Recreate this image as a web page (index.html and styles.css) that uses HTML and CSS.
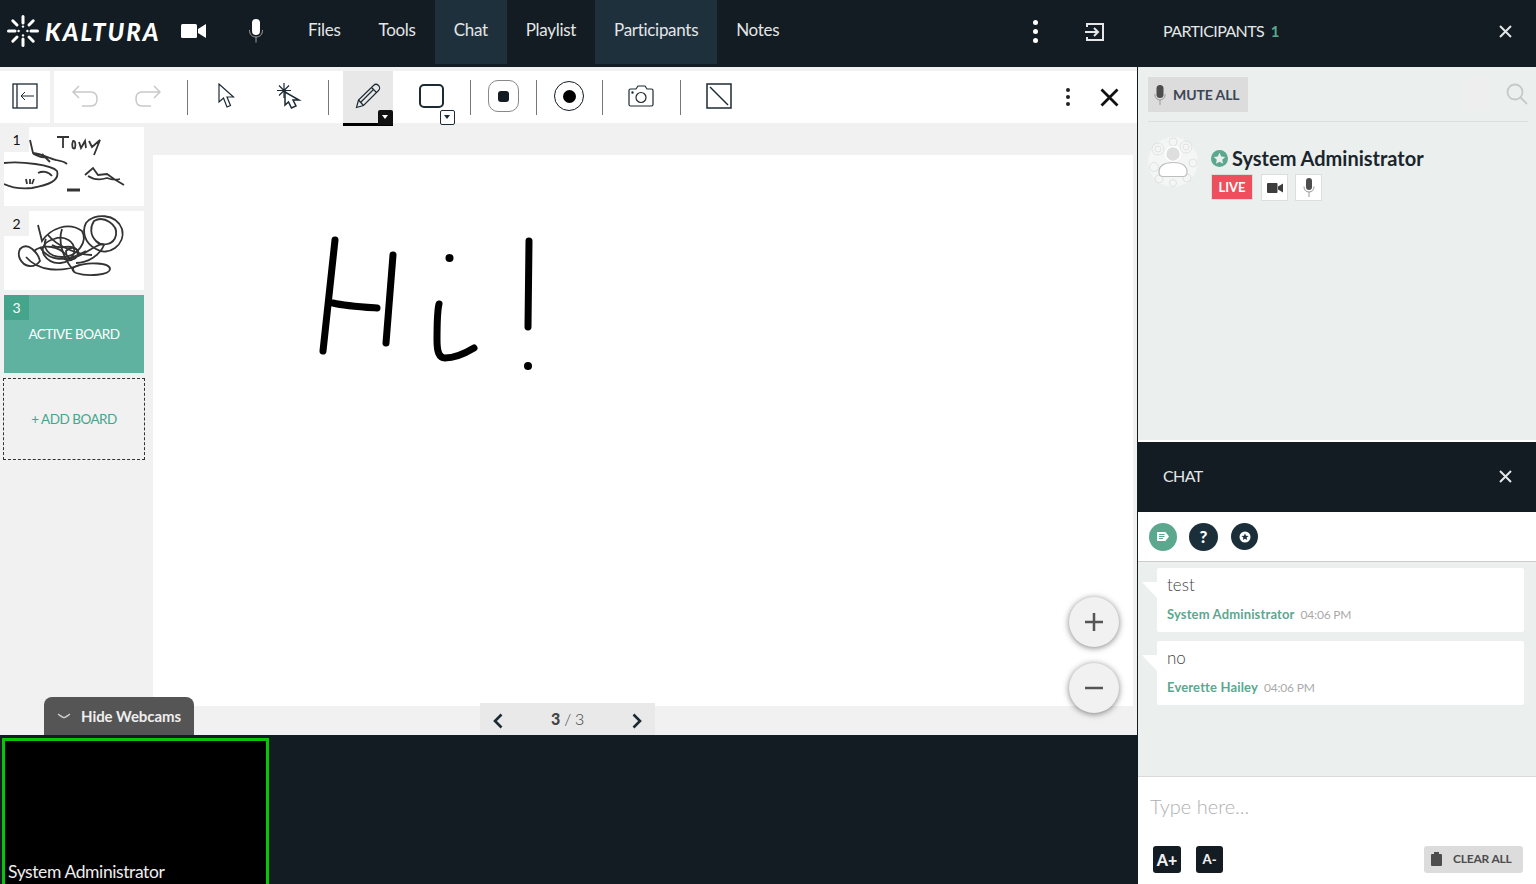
FILE: index.html
```html
<!DOCTYPE html>
<html>
<head>
<meta charset="utf-8">
	<title>Kaltura Meeting</title>
	<link rel="stylesheet" href="styles.css">
</head>
<body>
<div class="page">
	<div class="main">
		<div class="nav">
			<div class="logo">
				<svg class="logo-sun" width="32" height="32" viewBox="0 0 32 32">
					<g stroke="#fff" stroke-width="3" stroke-linecap="round">
						<path d="M16 1.500V8M16 24V30.500M1.500 16H8M24 16H30.500M5.800 5.800L10 10M22 22L26.200 26.200M26.200 5.800L22 10M10 22L5.800 26.200"/>
					</g>
					<circle cx="16" cy="11.600" r="1.200" fill="#fff"/>
					<circle cx="16" cy="20.400" r="1.200" fill="#fff"/>
					<circle cx="11.600" cy="16" r="1.200" fill="#fff"/>
					<circle cx="20.400" cy="16" r="1.200" fill="#fff"/>
				</svg>
				<span class="logo-text">KALTURA</span>
			</div>
			<span class="nav-icon nav-cam">
				<svg width="25" height="14" viewBox="0 0 25 14"><rect width="16" height="14" rx="1.500" fill="#fff"/><path d="M17 5L25 0V14L17 9Z" fill="#fff"/></svg>
			</span>
			<span class="nav-icon nav-mic">
				<svg width="16" height="24" viewBox="0 0 16 24"><rect x="4" y="0" width="8" height="16" rx="4" fill="#fff"/><path d="M1.500 11C1.500 15.500 4 18 8 18S14.500 15.500 14.500 11M8 18V23.500" fill="none" stroke="#9aa1a5" stroke-width="1"/></svg>
			</span>
			<a class="nav-link">Files</a>
			<a class="nav-link">Tools</a>
			<a class="nav-link on">Chat</a>
			<a class="nav-link">Playlist</a>
			<a class="nav-link on">Participants</a>
			<a class="nav-link">Notes</a>
			<span class="nav-space"></span>
			<span class="nav-dots"><i></i><i></i><i></i></span>
			<svg class="nav-exit" width="21" height="20" viewBox="0 0 21 20" fill="none" stroke="#e4e6e7" stroke-width="2"><path d="M3 5V2H19V18H3V15"/><path d="M1 10H14M10 6L14 10L10 14"/></svg>
		</div>
		<div class="content">
			<div class="toolbar">
				<div class="tool-side">
					<svg width="26" height="26" viewBox="0 0 26 26" fill="none" stroke="#1b2a33"><rect x="1" y="1" width="24" height="24" stroke-width="1.300"/><path d="M5 1V25" stroke-width="1.300"/><path d="M22 13H9M13 9L9 13L13 17" stroke-width="1"/></svg>
				</div>
				<div class="tool-main">
					<span class="tool"><svg width="26" height="22" viewBox="0 0 26 22" fill="none" stroke="#c9c9c9" stroke-width="1.500"><path d="M7 1L1 7L7 13M1 7H19C23 7 25 10 25 14S23 21 19 21H10"/></svg></span>
					<span class="tool"><svg width="26" height="22" viewBox="0 0 26 22" fill="none" stroke="#c9c9c9" stroke-width="1.500"><path d="M19 1L25 7L19 13M25 7H7C3 7 1 10 1 14S3 21 7 21H16"/></svg></span>
					<span class="sep"></span>
					<span class="tool"><svg width="18" height="26" viewBox="0 0 18 26" fill="none" stroke="#1b2a33" stroke-width="1.200"><path d="M2 1V19L6.500 15L10 24L13.500 22.500L10 14H16.500Z"/></svg></span>
					<span class="tool"><svg width="26" height="26" viewBox="0 0 26 26" fill="none" stroke="#1b2a33" stroke-width="1.200"><path d="M8 0V15M1 7.500H15M3 2.500L13 12.500M13 2.500L3 12.500"/><path d="M9 9V22L12.500 19L15.500 25L20 23L17 17H23Z" fill="#fff" stroke-width="1.500"/></svg></span>
					<span class="sep"></span>
					<span class="tool tool-on">
						<svg width="26" height="26" viewBox="0 0 26 26" fill="none" stroke="#1b2a33" stroke-width="1.200"><path d="M1.500 24.500L3.500 17L18.500 2.500C20 1 22 1 23.500 2.500S25 6 23.500 7.500L8.500 22.500Z"/><path d="M3.500 17L8.500 22.500M16.500 4.500L21.500 9.500M5.500 19.500L19 6"/></svg>
						<span class="caret caret-dark"></span>
					</span>
					<span class="tool">
						<span class="shape-box"></span>
						<span class="caret caret-light"></span>
					</span>
					<span class="sep"></span>
					<span class="tool tool-sm"><span class="stop-ring"><i></i></span></span>
					<span class="sep"></span>
					<span class="tool tool-sm"><span class="rec-ring"><i></i></span></span>
					<span class="sep"></span>
					<span class="tool"><svg width="26" height="22" viewBox="0 0 26 22" fill="none" stroke="#1b2a33" stroke-width="1.200"><path d="M2.500 4H8L10 1H17L19 4H23.500C24.500 4 25 4.500 25 5.500V19.500C25 20.500 24.500 21 23.500 21H2.500C1.500 21 1 20.500 1 19.500V5.500C1 4.500 1.500 4 2.500 4Z"/><circle cx="13" cy="12.500" r="5"/><circle cx="4.500" cy="7.500" r=".6"/></svg></span>
					<span class="sep"></span>
					<span class="tool"><svg width="26" height="26" viewBox="0 0 26 26" fill="none" stroke="#1b2a33"><rect x="1" y="1" width="24" height="24" stroke-width="1.500"/><path d="M4 4L22 22" stroke-width="1.500"/></svg></span>
					<span class="tool-space"></span>
					<span class="tool-dots"><i></i><i></i><i></i></span>
					<svg class="tool-close" width="19" height="19" viewBox="0 0 19 19" stroke="#111" stroke-width="2.800"><path d="M1.500 1.500L17.500 17.500M17.500 1.500L1.500 17.500"/></svg>
				</div>
			</div>
			<div class="stage">
				<div class="boards">
					<div class="board">
						<span class="board-num">1</span>
						<svg class="scribble" viewBox="0 0 140 79" fill="none" stroke="#333" stroke-width="1.800">
							<path d="M53 10H65M59 10V21M69 14C71 13 72 17 71 21C69 23 67 19 69 14ZM75 15L77 21L81 14L82 21M85 14L88 20L96 13L90 28"/>
							<path d="M26 13L29 26C38 27 46 32 52 33C56 34 60 34 63 37M29 27C33 28 37 32 42 30M38 27L46 35"/>
							<path d="M0 36C18 34 48 38 53 44C56 54 44 58 28 61C16 62 6 60 0 57M34 46C38 44 44 44 48 49M22 52L23 57M26 52V57M30 52L28 57"/>
							<path d="M81 48L89 41L94 48L103 47L110 52L120 58M84 49C90 53 97 53 103 51C108 53 112 53 116 52"/>
							<path d="M63 63H76" stroke-width="3"/>
						</svg>
					</div>
					<div class="board">
						<span class="board-num">2</span>
						<svg class="scribble" viewBox="0 0 140 79" fill="none" stroke="#333" stroke-width="1.800">
							<path d="M16 38C24 30 34 42 36 50C30 58 20 56 16 48C14 44 15 40 16 38Z"/>
							<path d="M34 14L38 30C46 18 64 10 78 20C84 30 74 46 58 46C44 46 38 36 42 28"/>
							<path d="M82 12C90 2 112 2 118 18C122 34 104 46 92 38C80 32 78 20 82 12Z"/>
							<path d="M90 10C100 4 114 14 112 24C110 34 98 36 92 30C86 24 86 16 90 10Z"/>
							<path d="M50 28C60 24 72 30 70 42C66 54 48 56 40 44C36 36 42 30 50 28Z"/>
							<path d="M62 40C68 34 76 38 74 44C72 50 62 50 62 40ZM72 46C84 42 96 30 100 34C96 44 84 52 72 52"/>
							<path d="M70 56C84 50 106 52 106 58C106 64 84 66 72 62C68 60 68 58 70 56Z"/>
							<path d="M22 46C34 60 56 62 76 54M36 36C44 50 62 52 82 40M58 18C54 30 58 46 70 60M48 34C56 40 66 32 72 38C78 44 68 52 60 48"/>
							<path d="M44 24C52 34 72 44 88 44M30 40C40 32 56 36 62 44"/>
						</svg>
					</div>
					<div class="board board-active">
						<span class="board-num">3</span>
						ACTIVE BOARD
					</div>
					<div class="board-add">+ ADD BOARD</div>
				</div>
				<div class="canvas">
					<svg class="ink" viewBox="153 155 980 551" fill="none" stroke="#000" stroke-width="7" stroke-linecap="round" stroke-linejoin="round">
						<path d="M335 240L323 351M393 255L386 343M333 303C345 306 362 307 377 308"/>
						<path d="M439 304C437 312 437 322 437 340C437 352 439 358 445 358C455 358 464 354 474 348"/>
						<path d="M529 241L528 327"/>
						<circle cx="449.500" cy="258" r="4" fill="#000" stroke="none"/>
						<circle cx="528" cy="366" r="4" fill="#000" stroke="none"/>
					</svg>
					<div class="zoom-btns">
						<span class="zoom-btn"><svg width="18" height="18" viewBox="0 0 18 18" stroke="#555" stroke-width="2.500"><path d="M9 0V18M0 9H18"/></svg></span>
						<span class="zoom-btn"><svg width="18" height="18" viewBox="0 0 18 18" stroke="#555" stroke-width="2.500"><path d="M0 9H18"/></svg></span>
					</div>
				</div>
			</div>
			<div class="hide-cams">
				<svg width="14" height="6" viewBox="0 0 14 6" fill="none" stroke="#ccc" stroke-width="1.500"><path d="M1 1C4 3 6 4.500 7 4.500S10 3 13 1"/></svg>
				Hide Webcams
			</div>
			<div class="pager">
				<svg width="10" height="16" viewBox="0 0 10 16" fill="none" stroke="#1b2a33" stroke-width="2.600"><path d="M8.500 1.500L2 8L8.500 14.500"/></svg>
				<span class="pager-text"><b>3</b> / 3</span>
				<svg width="10" height="16" viewBox="0 0 10 16" fill="none" stroke="#1b2a33" stroke-width="2.600"><path d="M1.500 1.500L8 8L1.500 14.500"/></svg>
			</div>
			<div class="cams">
				<div class="cam"><span class="cam-name">System Administrator</span></div>
			</div>
		</div>
	</div>
	<div class="side">
		<div class="side-head part-head">
			<span class="side-title">PARTICIPANTS <b>1</b></span>
			<svg class="side-x" width="13" height="13" viewBox="0 0 13 13" stroke="#e4e6e7" stroke-width="2"><path d="M1 1L12 12M12 1L1 12"/></svg>
		</div>
		<div class="part-body">
			<div class="part-bar">
				<span class="mute-btn">
					<svg width="12" height="20" viewBox="0 0 12 20"><rect x="2.500" y="0" width="7" height="13" rx="3.500" fill="#4d4d4d"/><path d="M.8 9C.8 12.500 3 15 6 15S11.200 12.500 11.200 9M6 15V20" fill="none" stroke="#999" stroke-width="1"/></svg>
					MUTE ALL
				</span>
				<span class="part-space"></span>
				<span class="part-ghost"></span>
				<svg class="part-search" width="22" height="22" viewBox="0 0 22 22" fill="none" stroke="#c6c9c9" stroke-width="1.800"><circle cx="9" cy="9" r="7.500"/><path d="M14.500 14.500L21 21"/></svg>
			</div>
			<div class="person">
				<svg class="avatar" width="50" height="50" viewBox="0 0 50 50">
					<circle cx="25" cy="25" r="25" fill="#f4f5f5"/>
					<g fill="none" stroke="#dcdede" stroke-width=".8">
						<circle cx="10" cy="12" r="6"/><circle cx="10" cy="12" r="3"/>
						<circle cx="38" cy="10" r="6"/><circle cx="38" cy="10" r="3"/>
						<circle cx="6" cy="30" r="4.500"/><circle cx="45" cy="26" r="4"/>
						<circle cx="25" cy="5" r="4"/><circle cx="25" cy="46" r="3.500"/>
						<circle cx="39" cy="41" r="4"/><circle cx="11" cy="42" r="4"/>
					</g>
					<circle cx="25" cy="17" r="7.500" fill="#dedede" stroke="#fff" stroke-width="1.500"/>
					<path d="M11 35C11 28 17 25.500 25 25.500S39 28 39 35C39 38.500 37 39.500 35 39.500H15C13 39.500 11 38.500 11 35Z" fill="#fff" stroke="#bdbdbd" stroke-width="1.200"/>
				</svg>
				<div class="person-info">
					<div class="person-name">
						<svg width="17" height="17" viewBox="0 0 17 17"><circle cx="8.500" cy="8.500" r="8.500" fill="#5ba88f"/><path d="M8.500 2.800L10.200 6.500L14.200 7L11.200 9.700L12 13.700L8.500 11.700L5 13.700L5.800 9.700L2.800 7L6.800 6.500Z" fill="#ebefee"/></svg>
						System Administrator
					</div>
					<div class="person-btns">
						<span class="live">LIVE</span>
						<span class="mini-btn"><svg width="16" height="10" viewBox="0 0 16 10"><rect width="10.500" height="10" rx="1" fill="#3d3d3d"/><path d="M11 3.500L16 .5V9.500L11 6.500Z" fill="#3d3d3d"/></svg></span>
						<span class="mini-btn"><svg width="12" height="19" viewBox="0 0 12 19"><rect x="3" y="0" width="6" height="12" rx="3" fill="#4d4d4d"/><path d="M1 8.500C1 12 3 14 6 14S11 12 11 8.500M6 14V19" fill="none" stroke="#999" stroke-width="1"/></svg></span>
					</div>
				</div>
			</div>
		</div>
		<div class="side-head chat-head">
			<span class="side-title">CHAT</span>
			<svg class="side-x" width="13" height="13" viewBox="0 0 13 13" stroke="#e4e6e7" stroke-width="2"><path d="M1 1L12 12M12 1L1 12"/></svg>
		</div>
		<div class="chat-bar">
			<span class="round round-green"><svg width="12" height="9" viewBox="0 0 12 9"><path d="M0 1C0 .4.4 0 1 0H8.500L12 4.500L8.500 9H1C.4 9 0 8.600 0 8Z" fill="#fff"/><path d="M2 2.500H7.500M2 4.500H7.500M2 6.500H6" stroke="#5ba88f"/></svg></span>
			<span class="round round-q">?</span>
			<span class="round round-star"><svg width="12" height="12" viewBox="0 0 12 12"><circle cx="6" cy="6" r="5.500" fill="#fff"/><path d="M6 2.300L7 4.700L9.600 4.900L7.600 6.600L8.200 9.100L6 7.800L3.800 9.100L4.400 6.600L2.400 4.900L5 4.700Z" fill="#1b2f3b"/></svg></span>
		</div>
		<div class="chat-list">
			<div class="msg">
				<div class="msg-text">test</div>
				<div class="msg-meta"><b>System Administrator</b><span>04:06 PM</span></div>
			</div>
			<div class="msg">
				<div class="msg-text">no</div>
				<div class="msg-meta"><b>Everette Hailey</b><span>04:06 PM</span></div>
			</div>
		</div>
		<div class="chat-input">
			<div class="type-here">Type here...</div>
			<div class="input-btns">
				<span class="font-btn font-up">A+</span>
				<span class="font-btn font-down">A-</span>
				<span class="clear-btn">
					<svg width="11" height="14" viewBox="0 0 11 14"><rect x="0" y="2" width="11" height="12" rx="1" fill="#4d4d4d"/><rect x="3" y="0" width="5" height="2" fill="#4d4d4d"/></svg>
					CLEAR ALL
				</span>
			</div>
		</div>
	</div>
</div>
</body>
</html>
```

FILE: styles.css
```css
*{
	margin: 0;
	padding: 0;
	box-sizing: border-box;
}
html,body{
	width: 100%;
	height: 100%;
	overflow: hidden;
}
body{
	font-family: "Lato","Noto Sans",sans-serif;
	color: #333;
	background: #f1f1f1;
}
svg{
	display: block;
}
.page{
	display: flex;
	width: 1536px;
	height: 884px;
}
.main{
	display: flex;
	flex-direction: column;
	width: 1137px;
}

/* top bar */
.nav{
	display: flex;
	align-items: flex-start;
	height: 67px;
	background: #121c22;
	color: #e4e6e7;
}
.logo{
	display: flex;
	align-items: center;
	height: 62px;
	padding-left: 7px;
	width: 173px;
}
.logo-text{
	margin-left: 6px;
	font-size: 24px;
	font-weight: 900;
	font-style: italic;
	letter-spacing: 2px;
	color: #fff;
}
.nav-icon{
	display: flex;
	align-items: center;
	justify-content: center;
	height: 62px;
}
.nav-cam{
	width: 25px;
	margin-left: 8px;
}
.nav-mic{
	width: 16px;
	margin: 0 25px 0 42px;
}
.nav-link{
	display: block;
	height: 64px;
	padding: 0 19px;
	font-size: 17px;
	line-height: 60px;
	letter-spacing: -.3px;
}
.nav-link.on{
	background: #1f303d;
}
.nav-space{
	flex: 1;
}
.nav-dots{
	display: flex;
	flex-direction: column;
	gap: 4px;
	margin: 20px 46px 0 0;
}
.nav-dots i{
	display: block;
	width: 5px;
	height: 5px;
	border-radius: 50%;
	background: #fff;
}
.nav-exit{
	margin: 22px 32px 0 0;
}

/* left side */
.content{
	position: relative;
	display: flex;
	flex-direction: column;
	flex: 1;
	min-height: 0;
}
.toolbar{
	display: flex;
	gap: 4px;
	height: 52px;
	margin-top: 4px;
}
.tool-side{
	display: flex;
	align-items: center;
	justify-content: center;
	width: 50px;
	padding-bottom: 2px;
	background: #fff;
}
.tool-main{
	display: flex;
	align-items: center;
	flex: 1;
	padding-left: 6px;
	background: #fff;
}
.tool{
	position: relative;
	display: flex;
	align-items: center;
	justify-content: center;
	flex: none;
	width: 50px;
	height: 52px;
	padding-bottom: 2px;
}
.tool + .tool{
	margin-left: 13px;
}
.tool-sm{
	width: 38px;
}
.tool-on{
	margin-left: 1px;
	background: #e8e8e8;
	box-shadow: 0 3px 0 #000;
}
.sep{
	flex: none;
	width: 1px;
	height: 35px;
	margin: 0 13px 0 14px;
	background: #777;
}
.caret{
	position: absolute;
	display: block;
	width: 15px;
	height: 15px;
}
.caret:after{
	content: "";
	position: absolute;
	left: 4px;
	top: 5px;
	border: 3.500px solid transparent;
	border-bottom: 0;
	border-top: 4px solid #1b2a33;
}
.caret-dark{
	right: 0;
	bottom: -2px;
	background: #111;
	border-radius: 2px 2px 0 0;
}
.caret-dark:after{
	border-top-color: #fff;
}
.caret-light{
	right: 1px;
	bottom: -2px;
	background: #fff;
	border: 1px solid #1b2a33;
	border-radius: 2px;
}
.caret-light:after{
	left: 3px;
	top: 4px;
}
.shape-box{
	display: block;
	width: 25px;
	height: 24px;
	border: 2px solid #1b2a33;
	border-radius: 5px;
}
.stop-ring{
	display: flex;
	align-items: center;
	justify-content: center;
	width: 31px;
	height: 32px;
	border: 1px solid #888;
	border-radius: 10px;
}
.stop-ring i{
	display: block;
	width: 11px;
	height: 11px;
	border-radius: 3px;
	background: #121c22;
}
.rec-ring{
	display: flex;
	align-items: center;
	justify-content: center;
	width: 30px;
	height: 30px;
	border: 1.500px solid #121c22;
	border-radius: 50%;
}
.rec-ring i{
	display: block;
	width: 13px;
	height: 13px;
	border-radius: 50%;
	background: #000;
}
.tool-space{
	flex: 1;
}
.tool-dots{
	display: flex;
	flex-direction: column;
	gap: 3px;
	margin-right: 30px;
}
.tool-dots i{
	display: block;
	width: 4px;
	height: 4px;
	border-radius: 50%;
	background: #222;
}
.tool-close{
	margin-right: 18px;
}

/* boards and canvas */
.stage{
	display: flex;
	height: 612px;
	padding-right: 4px;
}
.boards{
	flex: none;
	width: 153px;
	padding: 4px 0 0 4px;
}
.board{
	position: relative;
	width: 140px;
	height: 79px;
	margin-bottom: 5px;
	background: #fff;
	overflow: hidden;
}
.board-num{
	position: absolute;
	z-index: 1;
	left: 0;
	top: 0;
	width: 25px;
	height: 25px;
	background: #f1f1f1;
	color: #111;
	font-size: 14px;
	line-height: 25px;
	text-align: center;
}
.scribble{
	width: 140px;
	height: 79px;
	filter: blur(.7px);
}
.board-active{
	height: 78px;
	background: #5fb2a0;
	color: #fff;
	font-size: 13.500px;
	letter-spacing: -.5px;
	line-height: 78px;
	text-align: center;
}
.board-active .board-num{
	background: #44a58c;
	color: #fff;
	font-size: 14px;
	letter-spacing: 0;
}
.board-add{
	width: 142px;
	height: 82px;
	margin-left: -1px;
	border: 1px dashed #333;
	color: #44a58c;
	font-size: 13.500px;
	letter-spacing: -.5px;
	line-height: 80px;
	text-align: center;
}
.canvas{
	position: relative;
	flex: 1;
	height: 551px;
	margin-top: 32px;
	background: #fff;
}
.ink{
	width: 100%;
	height: 100%;
}
.zoom-btns{
	position: absolute;
	right: 14px;
	top: 442px;
	display: flex;
	flex-direction: column;
	gap: 16px;
}
.zoom-btn{
	display: flex;
	align-items: center;
	justify-content: center;
	width: 50px;
	height: 50px;
	border-radius: 50%;
	background: #f1f1f1;
	box-shadow: 0 1px 6px rgba(0,0,0,.5);
}
.hide-cams{
	position: absolute;
	left: 44px;
	top: 630px;
	display: flex;
	align-items: center;
	gap: 10px;
	width: 150px;
	height: 38px;
	padding-left: 13px;
	border-radius: 8px 8px 0 0;
	background: #555;
	color: #eee;
	font-size: 15px;
	font-weight: 700;
	letter-spacing: -.05px;
}
.pager{
	position: absolute;
	left: 480px;
	top: 636px;
	display: flex;
	align-items: center;
	justify-content: space-between;
	width: 175px;
	height: 32px;
	padding: 3px 13px 0;
	background: #e9e9e9;
}
.pager-text{
	margin-bottom: 4px;
	font-size: 16px;
	font-weight: 300;
	color: #444;
	letter-spacing: -.2px;
}
.pager-text b{
	font-weight: 900;
}
.cams{
	flex: 1;
	display: flex;
	align-items: flex-start;
	padding: 3px 0 0 2px;
	background: #121c22;
	height: 149px;
}
.cam{
	display: flex;
	align-items: flex-end;
	width: 267px;
	height: 155px;
	padding: 0 0 8px 3px;
	border: 3px solid #0ac40a;
	background: #000;
	color: #eee;
	font-size: 17.500px;
	letter-spacing: -.4px;
	line-height: 20px;
}

/* right side */
.side{
	display: flex;
	flex-direction: column;
	width: 399px;
	border-left: 1px solid #121c22;
	background: #fff;
}
.side-head{
	display: flex;
	justify-content: space-between;
	flex: none;
	padding: 0 24px 0 25px;
	background: #121c22;
	color: #e4e6e7;
}
.part-head{
	align-items: flex-start;
	height: 67px;
	padding-top: 21px;
}
.chat-head{
	align-items: flex-start;
	height: 70px;
	padding-top: 24px;
}
.side-title{
	font-size: 16px;
	letter-spacing: -.6px;
	line-height: 20px;
}
.side-title b{
	margin-left: 3px;
	color: #5ba88f;
	font-size: 15px;
}
.side-x{
	margin-top: 4px;
}
.part-body{
	flex: none;
	height: 375px;
	margin-bottom: 0;
	padding: 10px 8px 0 10px;
	background: #ebefee;
	border-bottom: 2px solid #fff;
}
.part-bar{
	display: flex;
	align-items: flex-start;
	height: 45px;
	border-bottom: 1px solid #dcdfde;
}
.mute-btn{
	display: flex;
	align-items: center;
	gap: 7px;
	width: 100px;
	height: 35px;
	padding-left: 6px;
	background: #dcdcdc;
	color: #3a4654;
	font-size: 14px;
	font-weight: 700;
	letter-spacing: -.1px;
}
.part-space{
	flex: 1;
}
.part-ghost{
	width: 25px;
	height: 33px;
	background: #eeeeee;
	margin-right: 16px;
}
.part-search{
	margin-top: 6px;
}
.person{
	display: flex;
	margin-top: 15px;
}
.avatar{
	flex: none;
}
.person-info{
	margin: 10px 0 0 13px;
}
.person-name{
	display: flex;
	align-items: center;
	gap: 4px;
	height: 22px;
	color: #1a252c;
	font-size: 20px;
	font-weight: 700;
}
.person-btns{
	display: flex;
	gap: 7px;
	margin-top: 5px;
}
.live{
	width: 42px;
	height: 26px;
	margin-right: 1px;
	background: #ee4f5c;
	border: 1px solid #dcdcdc;
	color: #fff;
	font-size: 13px;
	font-weight: 700;
	line-height: 24px;
	text-align: center;
}
.mini-btn{
	display: flex;
	align-items: center;
	justify-content: center;
	width: 27px;
	height: 27px;
	background: #fff;
	border: 1px solid #dcdfde;
}
.chat-bar{
	display: flex;
	align-items: center;
	flex: none;
	gap: 12px;
	height: 50px;
	padding: 0 0 0 11px;
	border-bottom: 1px solid #ccc;
	background: #fff;
}
.round{
	display: flex;
	align-items: center;
	justify-content: center;
	width: 28px;
	height: 28px;
	border-radius: 50%;
	color: #fff;
	font-size: 17px;
	font-weight: 900;
}
.round-green{
	background: #5ba88f;
}
.round-q{
	width: 29px;
	background: #1b2f3b;
}
.round-star{
	width: 27px;
	height: 27px;
	margin-left: 1px;
	background: #1b2f3b;
}
.chat-list{
	flex: 1;
	padding: 6px 12px 0 19px;
	background: #ebefee;
	border-bottom: 1px solid #d8dbda;
}
.msg{
	position: relative;
	height: 64px;
	margin-bottom: 9px;
	padding: 6px 10px 0;
	border-radius: 2px;
	background: #fff;
}
.msg:before{
	content: "";
	position: absolute;
	left: -15px;
	top: 14px;
	border-top: 16px solid #fff;
	border-left: 15px solid transparent;
}
.msg-text{
	color: #444;
	font-size: 17px;
	font-weight: 300;
	line-height: 22px;
}
.msg-meta{
	margin-top: 9px;
	font-size: 13px;
	line-height: 18px;
}
.msg-meta b{
	color: #5ba88f;
	letter-spacing: .15px;
}
.msg-meta span{
	margin-left: 6px;
	color: #aaa;
	font-size: 12px;
	letter-spacing: -.2px;
}
.chat-input{
	flex: none;
	height: 107px;
	padding: 16px 13px 0 13px;
	background: #fff;
}
.type-here{
	color: #b0b0b0;
	font-size: 20px;
	font-weight: 300;
	line-height: 26px;
	margin-left: -1px;
}
.input-btns{
	display: flex;
	align-items: center;
	margin: 27px 0 0 2px;
}
.font-btn{
	height: 27px;
	border-radius: 3px;
	background: #121c22;
	color: #eee;
	font-weight: 900;
	line-height: 27px;
	text-align: center;
}
.font-up{
	width: 28px;
	font-size: 16px;
}
.font-down{
	width: 27px;
	margin-left: 15px;
	font-size: 13px;
}
.clear-btn{
	display: flex;
	align-items: center;
	gap: 11px;
	width: 99px;
	height: 27px;
	margin-left: auto;
	padding: 0 0 2px 7px;
	border-radius: 3px;
	background: #dcdcdc;
	color: #4d4d4d;
	font-size: 12px;
	font-weight: 700;
	letter-spacing: -.2px;
}
```
